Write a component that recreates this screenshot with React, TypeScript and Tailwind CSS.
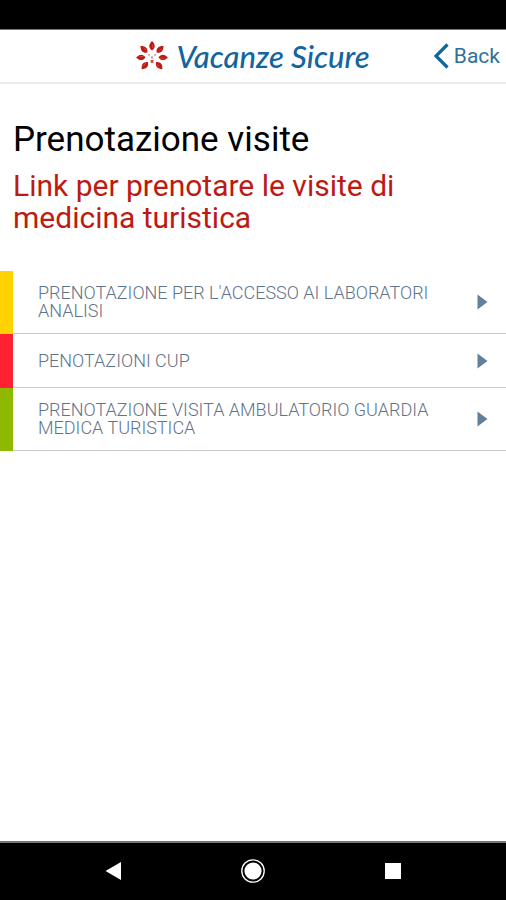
import React from 'react';

const links = [
  { label: "Prenotazione per l'accesso ai laboratori analisi", color: 'bg-[#ffd200]' },
  { label: 'Penotazioni CUP', color: 'bg-[#ff2233]' },
  { label: 'Prenotazione visita ambulatorio guardia medica turistica', color: 'bg-[#8fb900]' },
];

const petals = [-140, -92, -46, 0, 46, 92, 140];

const Logo: React.FC = () => (
  <div className="flex items-center gap-2">
    <svg viewBox="0 0 32 30" className="h-[30px] w-8" aria-hidden="true">
      {petals.map((angle) => (
        <g key={angle} transform={`translate(16 16) rotate(${angle})`}>
          <path d="M0 -6.5C-3.7 -9 -3.6 -12.5 0 -16C3.6 -12.5 3.7 -9 0 -6.5Z" fill="#bd1a12" />
          <path d="M0.8 -8.5V-12.5" stroke="#d9604f" strokeWidth="0.6" />
        </g>
      ))}
      <g fill="#cf5548">
        <circle cx="13" cy="14" r="0.8" />
        <circle cx="19" cy="14" r="0.8" />
        <path d="M15.3 15.5h1.4v2h-1.4zM14 19h4l-1 1.5 .5 1.5h-3l.5-1.5z" />
      </g>
    </svg>
    <span className="font-['Lato',sans-serif] text-[31px] leading-8 font-medium italic whitespace-nowrap text-[#12659f]">
      Vacanze Sicure
    </span>
  </div>
);

const Header: React.FC = () => (
  <header className="grid h-[54px] grid-cols-[1fr_auto_1fr] items-center border-b-2 border-[#ebebeb]">
    <div />
    <Logo />
    <button type="button" className="flex items-center justify-end gap-1 pr-1.5 text-[21px] leading-6 text-[#2e6f9e]">
      <svg viewBox="0 0 16 26" className="h-[26px] w-4" fill="none" aria-hidden="true">
        <path d="M13.5 1.5L2 13L13.5 24.5" stroke="#12659f" strokeWidth="3.2" />
      </svg>
      Back
    </button>
  </header>
);

const App: React.FC = () => {
  return (
    <div className="flex min-h-screen flex-col bg-white font-['Roboto',sans-serif]">
      <div className="h-[30px] border-b border-[#777] bg-black" />
      <Header />

      <main className="flex-1">
        <div className="px-[13px] pt-9 pb-[37px]">
          <h1 className="text-[35px] leading-10 text-black">Prenotazione visite</h1>
          <h2 className="mt-2.5 text-[30px] leading-8 text-[#bd1a12]">
            Link per prenotare le visite di medicina turistica
          </h2>
        </div>

        <nav>
          {links.map((link) => (
            <a key={link.label} href="#" className="flex min-h-[54px]">
              <span className={`w-[13px] shrink-0 ${link.color}`} />
              <span className="flex flex-1 items-center justify-between border-b border-[#cccccc] py-[13px] pr-[18px] pl-[25px]">
                <span className="max-w-[410px] text-[18px] leading-[18px] font-light text-[#5f7389] uppercase">
                  {link.label}
                </span>
                <svg viewBox="0 0 11 16" className="h-4 w-[11px] shrink-0" aria-hidden="true">
                  <path d="M0.5 0.5L10.5 8L0.5 15.5Z" fill="#62809c" />
                </svg>
              </span>
            </a>
          ))}
        </nav>
      </main>

      <footer className="grid h-[59px] grid-cols-[1fr_auto_1fr] items-center border-t-2 border-[#777] bg-black pb-0.5">
        <button type="button" aria-label="Indietro" className="mr-[120px] justify-self-end">
          <svg viewBox="0 0 16 18" className="h-[18px] w-4">
            <path d="M0.5 9L16 0V18Z" fill="#fff" />
          </svg>
        </button>
        <button type="button" aria-label="Home">
          <svg viewBox="0 0 24 24" className="size-6">
            <circle cx="12" cy="12" r="11.2" fill="none" stroke="#fff" strokeWidth="1.3" />
            <circle cx="12" cy="12" r="8.6" fill="#fff" />
          </svg>
        </button>
        <button type="button" aria-label="App recenti" className="ml-[120px] justify-self-start">
          <svg viewBox="0 0 16 16" className="size-4">
            <rect width="16" height="16" fill="#fff" />
          </svg>
        </button>
      </footer>
    </div>
  );
};

export default App;
